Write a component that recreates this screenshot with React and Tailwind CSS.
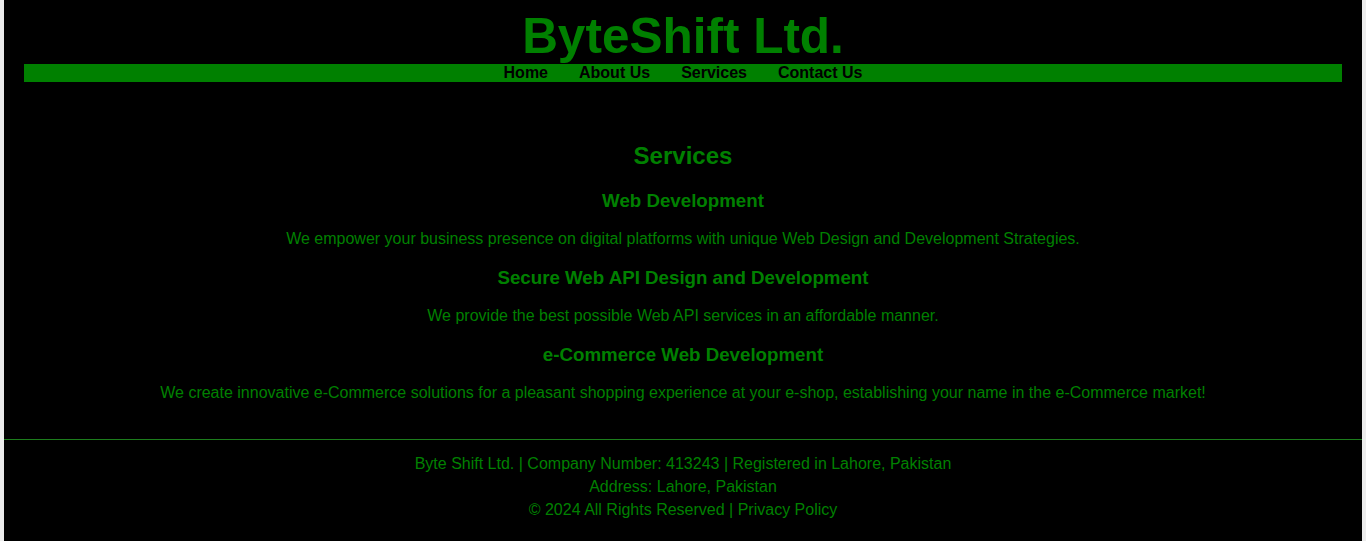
export default function App() {
  const services = [
    {
      title: 'Web Development',
      text: 'We empower your business presence on digital platforms with unique Web Design and Development Strategies.',
    },
    {
      title: 'Secure Web API Design and Development',
      text: 'We provide the best possible Web API services in an affordable manner.',
    },
    {
      title: 'e-Commerce Web Development',
      text: 'We create innovative e-Commerce solutions for a pleasant shopping experience at your e-shop, establishing your name in the e-Commerce market!',
    },
  ];

  return (
    <div className="min-h-screen bg-[#ececec] px-[4px] font-['Liberation_Sans',Arial,sans-serif]">
      <div className="min-h-[541px] bg-black text-[#008000]">
        {/* Header */}
        <header className="px-[20px] pt-[7px] text-center">
          <h1 className="text-[49.5px] font-bold leading-[57px]">ByteShift Ltd.</h1>
          <nav className="flex h-[18px] items-center justify-center gap-[31px] bg-[#008000] text-[16px] font-bold leading-[18px] text-black">
            <a href="#">Home</a>
            <a href="#">About Us</a>
            <a href="#">Services</a>
            <a href="#">Contact Us</a>
          </nav>
        </header>

        {/* Services */}
        <section className="px-[20px] pt-[60px] pb-[36px] text-center">
          <h2 className="mb-[19.92px] text-[24px] font-bold leading-[27.6px]">Services</h2>
          {services.map((s, i) => (
            <div key={s.title} className={i > 0 ? 'mt-[18.2px]' : ''}>
              <h3 className="text-[18.72px] font-bold leading-[21.5px]">{s.title}</h3>
              <p className="mt-[19px] text-[16px] leading-[18.4px]">{s.text}</p>
            </div>
          ))}
        </section>

        {/* Footer */}
        <footer className="border-t border-[#1c7d1c] pt-[12px] pb-[20px] text-center text-[16px] leading-[23px]">
          <p>Byte Shift Ltd. | Company Number: 413243 | Registered in Lahore, Pakistan</p>
          <p>Address: Lahore, Pakistan</p>
          <p>© 2024 All Rights Reserved | Privacy Policy</p>
        </footer>
      </div>
    </div>
  );
}
